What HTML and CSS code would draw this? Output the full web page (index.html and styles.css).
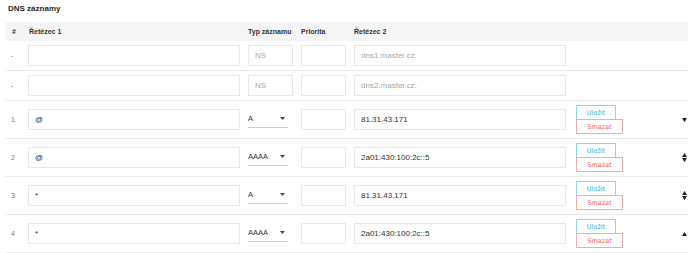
FILE: index.html
```html
<!DOCTYPE html>
<html>
<head>
    <title>DNS záznamy</title>
    <link rel="stylesheet" href="styles.css">
</head>
<body>
    <h3 class="titulek">DNS záznamy</h3>
    <div class="zaznamy">
        <div class="radek hlavicka">
            <div class="cislo">#</div>
            <div>Řetězec 1</div>
            <div>Typ záznamu</div>
            <div>Priorita</div>
            <div>Řetězec 2</div>
            <div></div>
            <div></div>
        </div>

        <div class="radek ns">
            <div class="cislo">-</div>
            <input type="text">
            <input type="text" class="maly" placeholder="NS">
            <input type="text" class="maly">
            <input type="text" placeholder="dns1.master.cz.">
            <div></div>
            <div></div>
        </div>

        <div class="radek ns">
            <div class="cislo">-</div>
            <input type="text">
            <input type="text" class="maly" placeholder="NS">
            <input type="text" class="maly">
            <input type="text" placeholder="dns2.master.cz.">
            <div></div>
            <div></div>
        </div>

        <div class="radek zaznam">
            <div class="cislo">1</div>
            <input type="text" value="@">
            <div class="vyber"><span>A</span><svg width="5" height="3" viewBox="0 0 5 3"><path d="M0 0h5L2.5 3z" fill="#444"/></svg></div>
            <input type="text" class="maly">
            <input type="text" value="81.31.43.171">
            <div class="tlacitka">
                <button class="btn-ulozit">Uložit</button>
                <button class="btn-smazat">Smazat</button>
            </div>
            <div class="sipky">
                <svg width="5" height="4" viewBox="0 0 5 4"><path d="M0 0h5L2.5 4z" fill="#222"/></svg>
            </div>
        </div>

        <div class="radek zaznam">
            <div class="cislo">2</div>
            <input type="text" value="@">
            <div class="vyber"><span>AAAA</span><svg width="5" height="3" viewBox="0 0 5 3"><path d="M0 0h5L2.5 3z" fill="#444"/></svg></div>
            <input type="text" class="maly">
            <input type="text" value="2a01:430:100:2c::5">
            <div class="tlacitka">
                <button class="btn-ulozit">Uložit</button>
                <button class="btn-smazat">Smazat</button>
            </div>
            <div class="sipky">
                <svg width="5" height="4" viewBox="0 0 5 4"><path d="M0 4h5L2.5 0z" fill="#222"/></svg>
                <svg width="5" height="4" viewBox="0 0 5 4"><path d="M0 0h5L2.5 4z" fill="#222"/></svg>
            </div>
        </div>

        <div class="radek zaznam">
            <div class="cislo">3</div>
            <input type="text" value="*">
            <div class="vyber"><span>A</span><svg width="5" height="3" viewBox="0 0 5 3"><path d="M0 0h5L2.5 3z" fill="#444"/></svg></div>
            <input type="text" class="maly">
            <input type="text" value="81.31.43.171">
            <div class="tlacitka">
                <button class="btn-ulozit">Uložit</button>
                <button class="btn-smazat">Smazat</button>
            </div>
            <div class="sipky">
                <svg width="5" height="4" viewBox="0 0 5 4"><path d="M0 4h5L2.5 0z" fill="#222"/></svg>
                <svg width="5" height="4" viewBox="0 0 5 4"><path d="M0 0h5L2.5 4z" fill="#222"/></svg>
            </div>
        </div>

        <div class="radek zaznam">
            <div class="cislo">4</div>
            <input type="text" value="*">
            <div class="vyber"><span>AAAA</span><svg width="5" height="3" viewBox="0 0 5 3"><path d="M0 0h5L2.5 3z" fill="#444"/></svg></div>
            <input type="text" class="maly">
            <input type="text" value="2a01:430:100:2c::5">
            <div class="tlacitka">
                <button class="btn-ulozit">Uložit</button>
                <button class="btn-smazat">Smazat</button>
            </div>
            <div class="sipky">
                <svg width="5" height="4" viewBox="0 0 5 4"><path d="M0 4h5L2.5 0z" fill="#222"/></svg>
            </div>
        </div>
    </div>
</body>
</html>
```

FILE: styles.css
```css
body {margin: 0; font-family: "Liberation Sans", Arial, sans-serif; color: #333; background: #fff;}
.titulek {font-size: 8px; line-height: 12px; font-weight: bold; margin: 3px 0 7px 8px; color: #2a2a2a;}
.zaznamy {width: 683px; margin-left: 5px;}
.radek {display: grid; grid-template-columns: 23px 220px 53px 53px 222px 1fr 10px; align-items: center;}
.hlavicka {background-color: #f5f5f5; height: 19px; font-size: 7px; font-weight: bold; color: #333;}
.hlavicka div:nth-child(2) {padding-left: 1px;}
.cislo {padding-left: 6px; font-size: 7px; color: #777;}
.hlavicka .cislo {color: #333; padding-left: 7px;}
.ns {padding: 4px 0; border-bottom: 1px solid #ececec;}
.zaznam {padding: 4px 0; border-bottom: 1px solid #ececec;}
input {box-sizing: border-box; width: 212px; height: 21px; border: 1px solid #e8e8e8; padding: 0 6px; font-family: "Liberation Sans", Arial, sans-serif; font-size: 8px; color: #333; outline: none;}
input.maly {width: 45px;}
input::placeholder {color: #a8a8a8;}
.vyber {box-sizing: border-box; width: 40px; height: 19px; border-bottom: 1px solid #cfcfcf; display: flex; justify-content: space-between; align-items: center; font-size: 7.5px; color: #333; padding-right: 3px; align-self: start; margin-top: 4px;}
.tlacitka {display: flex; flex-direction: column; align-items: flex-start;}
button {box-sizing: border-box; height: 15px; padding: 0 9px; background: #fff; font-family: "DejaVu Sans", Verdana, sans-serif; font-size: 6.5px; cursor: pointer;}
.btn-ulozit {border: 1px solid #8fd6e6; color: #2eb5d6; width: 40px;}
.btn-smazat {border: 1px solid #f5aba3; color: #f06357; width: 47px; margin-top: -1px;}
.sipky {display: flex; flex-direction: column; align-items: flex-end; gap: 1px; padding-right: 1px;}
.sipky svg {display: block;}
```
